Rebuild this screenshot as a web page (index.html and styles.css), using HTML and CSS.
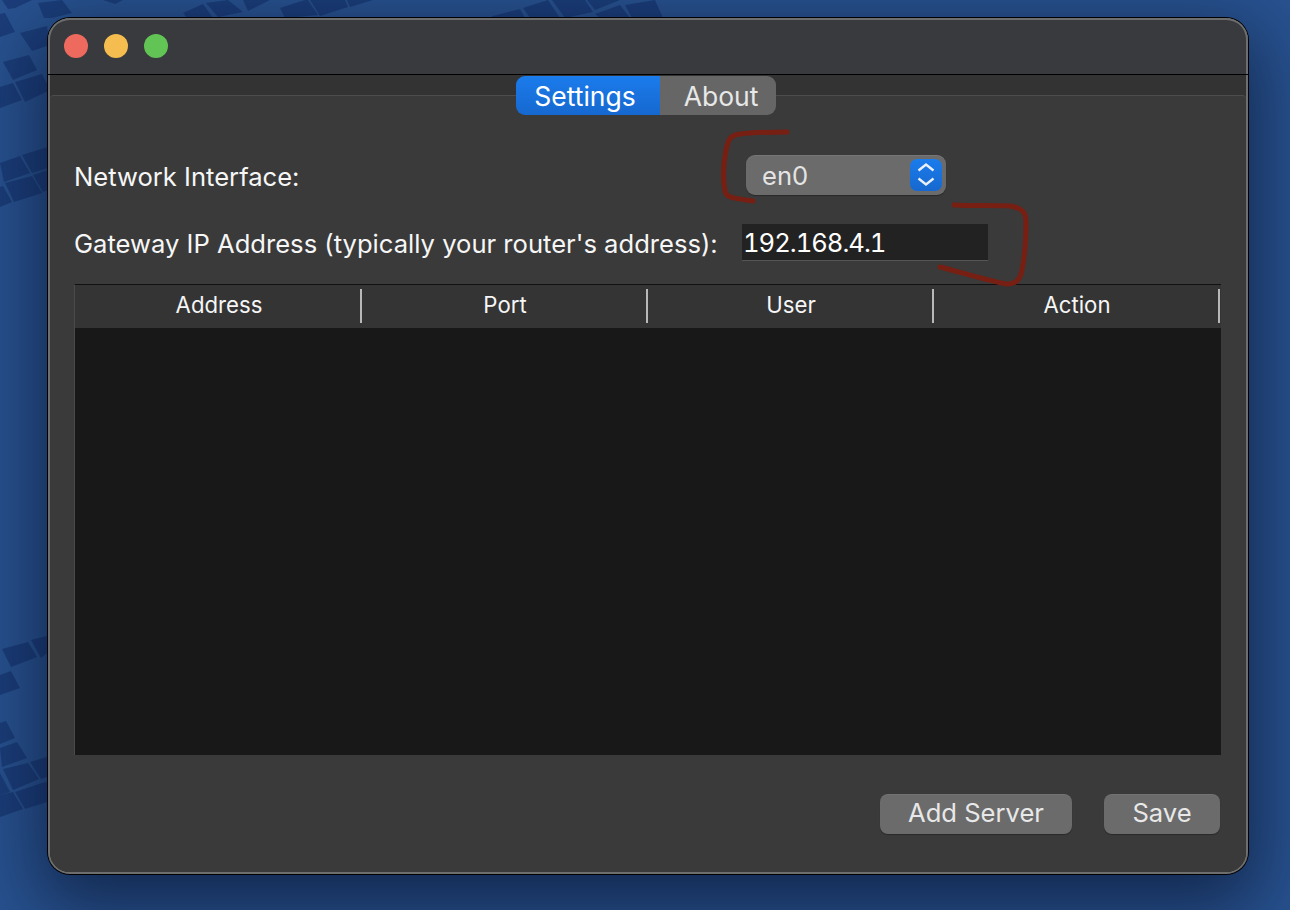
FILE: index.html
```html
<!DOCTYPE html>
<html>
<head>
    <title>Settings</title>
    <link rel="stylesheet" href="styles.css">
</head>
<body>
    <!-- wallpaper tiles -->
    <svg class="wallpaper" width="1290" height="910">
        <g class="tile">
            <polygon points="38,3 62,0 72,13 52,18 44,18"/>
            <polygon points="103,0 123,0 115,4"/>
            <polygon points="183,13 203,4 213,18 187,18"/>
            <polygon points="206,3 228,0 243,12 218,17"/>
            <polygon points="243,0 270,0 248,11"/>
            <polygon points="280,8 305,0 308,0 318,15 285,18"/>
            <polygon points="310,0 345,0 348,7 320,16"/>
            <polygon points="347,0 373,0 350,7"/>
            <polygon points="493,16 520,9 525,18 490,18"/>
            <polygon points="523,8 548,0 560,18 530,18"/>
            <polygon points="552,0 585,0 593,12 565,18"/>
            <polygon points="587,0 620,0 595,10"/>
            <polygon points="595,14 620,5 630,18 600,18"/>
            <polygon points="625,5 655,0 663,18 632,18"/>
            <polygon points="2,0 32,0 15,8 8,9"/>
            <polygon points="0,14 5,13 15,32 0,37"/>
            <polygon points="20,33 47,26 50,45 32,51"/>
            <polygon points="3,62 29,55 37,70 13,80"/>
            <polygon points="15,82 42,74 50,90 25,102"/>
            <polygon points="0,87 13,83 22,100 0,108"/>
            <polygon points="0,163 20,156 30,173 4,182"/>
            <polygon points="22,155 48,147 48,168 32,173"/>
            <polygon points="5,183 32,176 42,193 14,202"/>
            <polygon points="33,175 48,170 48,190 43,192"/>
            <polygon points="0,187 3,186 12,202 0,207"/>
            <polygon points="2,649 28,642 37,657 11,667"/>
            <polygon points="31,640 47,636 47,653 41,658"/>
            <polygon points="0,675 11,671 20,688 0,695"/>
            <polygon points="0,723 6,721 15,738 0,744"/>
            <polygon points="0,748 17,742 27,758 2,767"/>
            <polygon points="3,769 28,763 39,779 13,790"/>
            <polygon points="30,762 47,757 47,777 41,779"/>
            <polygon points="0,773 10,792 0,795"/>
            <polygon points="0,795 13,792 23,809 0,817"/>
            <polygon points="15,792 42,783 47,782 47,802 25,809"/>
        </g>
    </svg>

    <div class="window">
        <div class="titlebar">
            <span class="light red"></span>
            <span class="light yellow"></span>
            <span class="light green"></span>
        </div>

        <div class="content">
            <div class="tabs">
                <div class="tab active">Settings</div>
                <div class="tab">About</div>
            </div>

            <div class="panel">
                <div class="form">
                    <label class="form-label">Network Interface:</label>
                    <div class="select">
                        <span>en0</span>
                        <span class="stepper">
                            <svg width="32" height="32" viewBox="0 0 32 32">
                                <path d="M8.5 11.5 L16 5.5 L23.5 11.5 M8.5 19.5 L16 25.5 L23.5 19.5"/>
                            </svg>
                        </span>
                    </div>
                    <label class="form-label">Gateway IP Address (typically your router's address):</label>
                    <div class="ip-input">192.168.4.1</div>
                </div>

                <div class="server-table">
                    <div class="table-head">
                        <div class="col">Address</div>
                        <div class="col">Port</div>
                        <div class="col">User</div>
                        <div class="col">Action</div>
                    </div>
                    <div class="table-body"></div>
                </div>

                <div class="actions">
                    <button class="btn btn-add">Add Server</button>
                    <button class="btn btn-save">Save</button>
                </div>
            </div>
        </div>
    </div>

    <!-- red pen marks on top of the screenshot -->
    <svg class="marks" width="1290" height="910">
        <path d="M787 132 C770 132 755 132 740 134 C730 135 728 140 726 150 C723 165 723 180 725 191 C726 197 730 198 753 201"/>
        <path d="M954 205 C975 206 995 205 1010 206 C1022 208 1026 212 1026 222 C1026 240 1025 255 1022 270 C1020 281 1015 284 1006 284 C985 280 960 272 940 267"/>
    </svg>
</body>
</html>
```

FILE: styles.css
```css
html, body { margin: 0; height: 100%; }
body {
    position: relative;
    width: 1290px;
    height: 910px;
    overflow: hidden;
    padding: 18px 0 0 48px;
    box-sizing: border-box;
    font-family: Inter, "Liberation Sans", sans-serif;
    font-size: 25.6px;
    color: #f6f6f6;
    background-color: #28528f;
}

.wallpaper { position: absolute; top: 0; left: 0; }
.tile polygon { fill: #16356f; opacity: 0.7; }
.marks { position: absolute; top: 0; left: 0; pointer-events: none; }
.marks path { fill: none; stroke: #771f12; stroke-width: 5; stroke-linecap: round; }

.window {
    position: relative;
    display: flex;
    flex-direction: column;
    width: 1200px;
    height: 856px;
    box-sizing: border-box;
    overflow: hidden;
    border-radius: 22px;
    background-color: #3a3a3a;
    box-shadow: 0 0 0 1px #000, inset 0 0 0 2px #6e6e6e, 0 24px 70px 10px rgba(8, 18, 45, 0.65);
}

.titlebar {
    display: flex;
    align-items: center;
    gap: 16px;
    flex: none;
    height: 56px;
    padding: 0 0 0 16px;
    border-bottom: 1px solid #000;
    background-color: #383a3e;
    box-shadow: inset 0 2px 0 #6e6e6e, inset 2px 0 0 #6e6e6e, inset -2px 0 0 #6e6e6e;
    border-radius: 22px 22px 0 0;
}
.light { width: 24px; height: 24px; border-radius: 50%; }
.red { background-color: #ee6a5f; }
.yellow { background-color: #f5bd4f; }
.green { background-color: #61c454; }

.content {
    flex: 1;
    display: flex;
    flex-direction: column;
    margin: 0 2px 2px 2px;
    padding-top: 1px;
    background-color: #333;
    border-radius: 0 0 20px 20px;
}

.tabs {
    position: relative;
    z-index: 1;
    display: flex;
    align-self: flex-start;
    height: 39px;
    margin: 0 0 -20px 466px;
    border-radius: 9px;
    overflow: hidden;
    font-size: 26.5px;
    line-height: 40px;
}
.tab { width: 116px; padding-left: 6px; box-sizing: border-box; text-align: center; background-color: #666; color: #e8e8e8; }
.tab.active { width: 144px; padding: 0 6px 0 0; color: #fff; background: linear-gradient(#1b7cec, #1668cf); }

.panel {
    flex: 1;
    display: flex;
    flex-direction: column;
    padding: 0 26px 0 24px;
    border-top: 1px solid #4d4d4d;
    border-radius: 4px 4px 20px 20px;
    background-color: #3a3a3a;
}

.form {
    display: grid;
    grid-template-columns: 668px 246px;
    grid-template-rows: 40px 37px;
    row-gap: 29px;
    align-items: center;
    margin-top: 59px;
}
.form-label { padding-top: 2px; }
.select {
    display: flex;
    align-items: center;
    justify-content: space-between;
    width: 200px;
    height: 40px;
    margin-left: 4px;
    padding: 0 4px 0 16px;
    box-sizing: border-box;
    border-radius: 9px;
    color: #e4e4e4;
    background-color: #6b6b6b;
    box-shadow: inset 0 1px 0 rgba(255, 255, 255, 0.08), 0 1px 1px rgba(0, 0, 0, 0.3);
}
.stepper {
    display: block;
    width: 32px;
    height: 32px;
    border-radius: 7px;
    background: linear-gradient(#1b7cec, #1668cf);
}
.stepper path { fill: none; stroke: #e8f0fa; stroke-width: 2.4; }
.ip-input {
    height: 37px;
    padding-left: 1px;
    line-height: 38px;
    box-sizing: border-box;
    background-color: #222;
    border-bottom: 1px solid #555;
    color: #fff;
    font-feature-settings: "tnum";
    letter-spacing: -1px;
}

.server-table {
    display: flex;
    flex-direction: column;
    height: 470px;
    margin: 23px -1px 0 0;
    border-top: 1px solid #111;
    border-left: 1px solid #4a4a4a;
    font-size: 22.2px;
}
.table-head { display: flex; flex: none; height: 43px; padding-left: 1px; background-color: #343434; }
.col {
    position: relative;
    width: 286px;
    text-align: center;
    line-height: 40px;
}
.col::after {
    content: "";
    position: absolute;
    top: 4px;
    right: 0;
    width: 2px;
    height: 34px;
    background-color: #b8b8b8;
}
.table-body { flex: 1; background-color: #181818; }

.actions {
    display: flex;
    justify-content: flex-end;
    gap: 32px;
    margin-top: 39px;
}
.btn {
    height: 40px;
    padding: 0 0 4px;
    border: 0;
    border-radius: 8px;
    font: inherit;
    color: #e8e8e8;
    background-color: #6b6b6b;
    box-shadow: inset 0 1px 0 rgba(255, 255, 255, 0.05), 0 1px 1px rgba(0, 0, 0, 0.3);
}
.btn-add { width: 192px; }
.btn-save { width: 116px; }
```
